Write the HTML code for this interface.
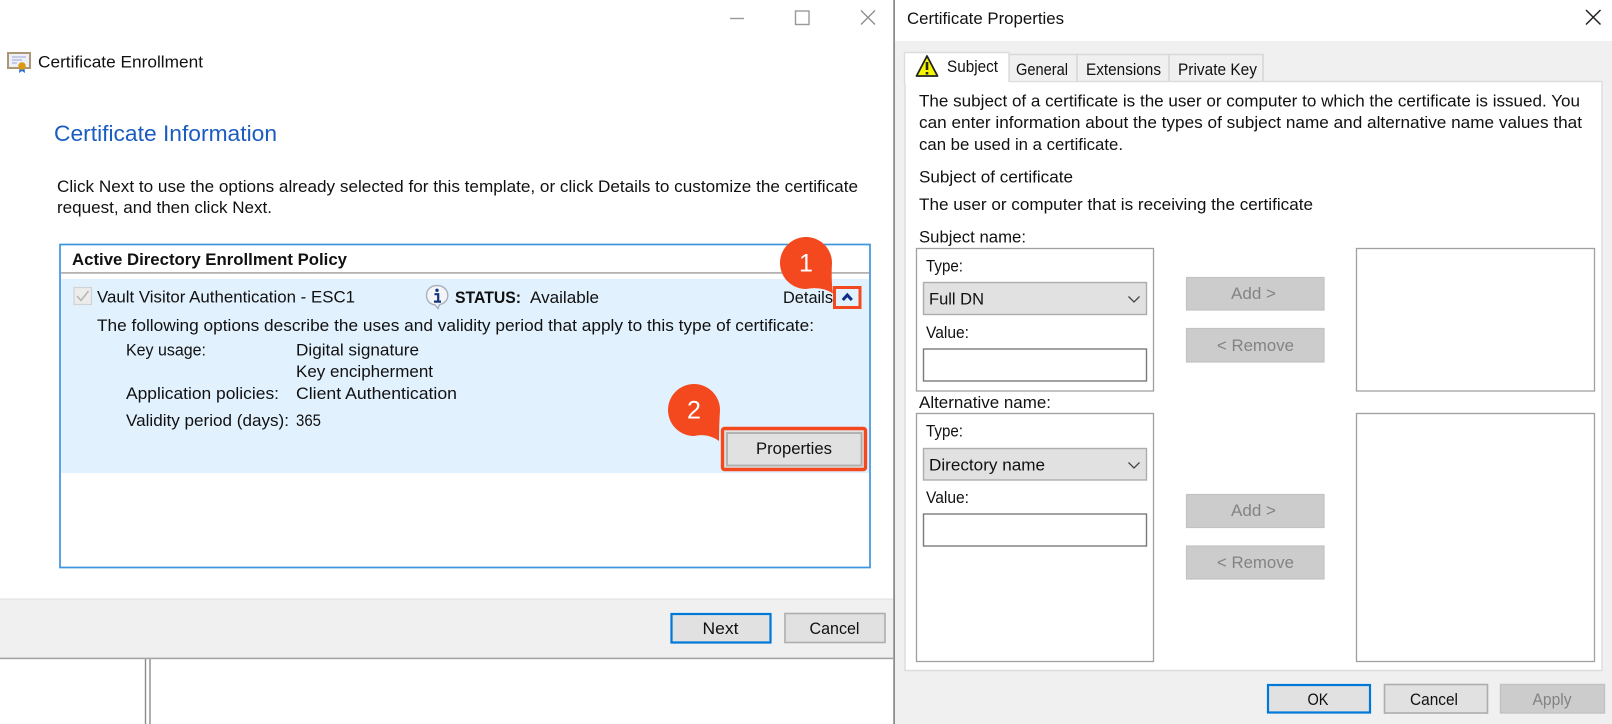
<!DOCTYPE html>
<html lang="en">
<head>
<meta charset="utf-8">
<title>Certificate Enrollment</title>
<style>
html,body{margin:0;padding:0;background:#fff;width:1612px;height:724px;overflow:hidden}
svg{display:block;filter:blur(.35px)}
text{font-family:"Liberation Sans",Arial,sans-serif;font-size:16.5px;fill:#111}
.d{fill:#838383}
.b{font-weight:700}
</style>
</head>
<body>
<svg xmlns="http://www.w3.org/2000/svg" width="1612" height="724" viewBox="0 0 1612 724">
<rect width="1612" height="724" fill="#fff"/>

<!-- Left window controls -->
<path d="M730 18.5H744" stroke="#999" stroke-width="1.4" fill="none"/>
<rect x="795.5" y="11" width="13.5" height="13.5" fill="none" stroke="#999" stroke-width="1.4"/>
<path d="M861 10.5L875 24.5M875 10.5L861 24.5" stroke="#8f8f8f" stroke-width="1.4" fill="none"/>

<!-- Certificate icon -->
<rect x="8" y="53" width="22" height="15" fill="#eef0f8" stroke="#ab9775" stroke-width="2"/>
<path d="M12 57H26M12 60H22M12 63H17" stroke="#9aa3d6" stroke-width="1.1" fill="none"/>
<path d="M19.5 68L19 73L22 71L25 73L24.5 68Z" fill="#2a6fd6"/>
<circle cx="22" cy="66" r="3.8" fill="#dc9a14"/>

<text x="38" y="67.5" textLength="165" lengthAdjust="spacingAndGlyphs">Certificate Enrollment</text>
<text x="54" y="141" textLength="223" lengthAdjust="spacingAndGlyphs" style="font-size:22px;fill:#1a5cc0">Certificate Information</text>
<text x="57" y="192" textLength="801" lengthAdjust="spacingAndGlyphs">Click Next to use the options already selected for this template, or click Details to customize the certificate</text>
<text x="57" y="213" textLength="215" lengthAdjust="spacingAndGlyphs">request, and then click Next.</text>

<!-- Policy panel -->
<rect x="60" y="244.5" width="810" height="323" fill="#fff" stroke="#3d95e0" stroke-width="1.7"/>
<rect x="61" y="272" width="808" height="1.8" fill="#b4b4b4"/>
<rect x="61" y="279" width="808" height="194" fill="#e2f1fe"/>
<text x="72" y="265" textLength="275" lengthAdjust="spacingAndGlyphs" class="b">Active Directory Enrollment Policy</text>

<rect x="74" y="287.5" width="17.5" height="17" fill="#ececec" stroke="#d2d2d2" stroke-width="1.2"/>
<path d="M77 296L81 300.5L88.5 291" stroke="#b5b5b5" stroke-width="1.5" fill="none"/>
<text x="97" y="302.7" textLength="258" lengthAdjust="spacingAndGlyphs">Vault Visitor Authentication - ESC1</text>

<!-- Info icon -->
<path d="M437 285.5C430.5 285.5 426.5 290 426.5 295.5C426.5 301 430.5 304.5 435 304.8L438 308.5L439.5 304.6C444.5 303.6 447.8 300 447.8 295.5C447.8 290 443.5 285.5 437 285.5Z" fill="#f3f5f9" stroke="#a9b0bc" stroke-width="1.4"/>
<circle cx="437" cy="290.3" r="1.7" fill="#13357f"/>
<path d="M434.5 294.2H438.2V301M434 301.6H441" stroke="#13357f" stroke-width="2.2" fill="none"/>

<text x="455" y="303" textLength="66" lengthAdjust="spacingAndGlyphs" class="b">STATUS:</text>
<text x="530" y="303" textLength="69" lengthAdjust="spacingAndGlyphs">Available</text>
<text x="783" y="303" textLength="50" lengthAdjust="spacingAndGlyphs">Details</text>

<path d="M842.8 300L847.3 295L851.8 300" stroke="#0f2f8a" stroke-width="3" fill="none"/>
<rect x="834.5" y="287.5" width="25.5" height="20" fill="none" stroke="#f4491f" stroke-width="3"/>

<text x="97" y="331" textLength="717" lengthAdjust="spacingAndGlyphs">The following options describe the uses and validity period that apply to this type of certificate:</text>
<text x="126" y="355.7" textLength="80" lengthAdjust="spacingAndGlyphs">Key usage:</text>
<text x="296" y="355.7" textLength="123" lengthAdjust="spacingAndGlyphs">Digital signature</text>
<text x="296" y="377" textLength="137" lengthAdjust="spacingAndGlyphs">Key encipherment</text>
<text x="126" y="399" textLength="153" lengthAdjust="spacingAndGlyphs">Application policies:</text>
<text x="296" y="399" textLength="161" lengthAdjust="spacingAndGlyphs">Client Authentication</text>
<text x="126" y="426" textLength="163" lengthAdjust="spacingAndGlyphs">Validity period (days):</text>
<text x="296" y="426" textLength="25" lengthAdjust="spacingAndGlyphs">365</text>

<!-- Properties -->
<rect x="722.5" y="428.5" width="143" height="41" rx="2" fill="#e1e1e1" stroke="#f4491f" stroke-width="3.4"/>
<rect x="727" y="433" width="134.5" height="32.5" fill="#e1e1e1" stroke="#adadad" stroke-width="1.8"/>
<text x="756" y="454" textLength="76" lengthAdjust="spacingAndGlyphs">Properties</text>

<!-- Callouts -->
<path d="M806 237A26 26 0 0 1 832 263Q831 280 833 293.5Q822 286 806 289A26 26 0 0 1 806 237Z" fill="#f4491f"/>
<text x="806" y="271.5" text-anchor="middle" style="font-size:25px;fill:#fff">1</text>
<path d="M694 384A26 26 0 0 1 720 410Q719 427 719 441Q708 433 694 436A26 26 0 0 1 694 384Z" fill="#f4491f"/>
<text x="694" y="418.5" text-anchor="middle" style="font-size:25px;fill:#fff">2</text>

<!-- Bottom bar left -->
<rect x="0" y="599" width="893" height="59" fill="#f0f0f0"/>
<rect x="0" y="598.5" width="893" height="1.2" fill="#e2e2e2"/>
<rect x="0" y="657.6" width="893" height="1.6" fill="#a6a6a6"/>
<rect x="671.5" y="614" width="99" height="28.5" fill="#e1e1e1" stroke="#0078d7" stroke-width="2.2"/>
<text x="720.5" y="634" text-anchor="middle" textLength="36" lengthAdjust="spacingAndGlyphs">Next</text>
<rect x="785" y="613.5" width="100" height="29" fill="#e1e1e1" stroke="#adadad" stroke-width="1.6"/>
<text x="834.5" y="634" text-anchor="middle" textLength="50" lengthAdjust="spacingAndGlyphs">Cancel</text>
<path d="M145.5 659V724M150 659V724" stroke="#8b8b8b" stroke-width="1.4" fill="none"/>

<!-- Divider -->
<rect x="893.3" y="0" width="1.6" height="724" fill="#7f7f7f"/>

<!-- Right window -->
<text x="907" y="24" textLength="157" lengthAdjust="spacingAndGlyphs">Certificate Properties</text>
<path d="M1586 10L1600.5 24.5M1600.5 10L1586 24.5" stroke="#222" stroke-width="1.5" fill="none"/>
<rect x="895" y="41" width="717" height="683" fill="#f0f0f0"/>
<rect x="905" y="81.5" width="697" height="589" fill="#fff" stroke="#dcdcdc" stroke-width="1.4"/>

<!-- Tabs -->
<path d="M1009 81V54.5H1077V81M1077 54.5H1169V81M1169 54.5H1263V81" fill="#f0f0f0" stroke="#d8d8d8" stroke-width="1.6"/>
<rect x="904.5" y="52" width="104.5" height="32" fill="#fff"/>
<path d="M904.5 84V52.5H1009V82" fill="none" stroke="#dcdcdc" stroke-width="1.4"/>
<path d="M927 56L937.5 76H916.5Z" fill="#f7f400" stroke="#222" stroke-width="1.8" stroke-linejoin="round"/>
<path d="M927 62V70M927 72V74.5" stroke="#2a2a10" stroke-width="2.6" fill="none"/>
<text x="947" y="72" textLength="51" lengthAdjust="spacingAndGlyphs">Subject</text>
<text x="1016" y="75" textLength="52" lengthAdjust="spacingAndGlyphs">General</text>
<text x="1086" y="75" textLength="75" lengthAdjust="spacingAndGlyphs">Extensions</text>
<text x="1178" y="75" textLength="79" lengthAdjust="spacingAndGlyphs">Private Key</text>

<text x="919" y="106.7" textLength="661" lengthAdjust="spacingAndGlyphs">The subject of a certificate is the user or computer to which the certificate is issued. You</text>
<text x="919" y="128" textLength="663" lengthAdjust="spacingAndGlyphs">can enter information about the types of subject name and alternative name values that</text>
<text x="919" y="150" textLength="204" lengthAdjust="spacingAndGlyphs">can be used in a certificate.</text>
<text x="919" y="182.7" textLength="154" lengthAdjust="spacingAndGlyphs">Subject of certificate</text>
<text x="919" y="210" textLength="394" lengthAdjust="spacingAndGlyphs">The user or computer that is receiving the certificate</text>
<text x="919" y="242.7" textLength="107" lengthAdjust="spacingAndGlyphs">Subject name:</text>

<!-- Subject group -->
<rect x="916.5" y="248.5" width="237" height="142.5" fill="#fff" stroke="#a0a0a0" stroke-width="1.3"/>
<rect x="1356.5" y="248.5" width="238" height="142.5" fill="#fff" stroke="#a0a0a0" stroke-width="1.3"/>
<text x="926" y="271.5" textLength="37" lengthAdjust="spacingAndGlyphs">Type:</text>
<rect x="923.5" y="282.5" width="223" height="32" fill="#e1e1e1" stroke="#adadad" stroke-width="1.4"/>
<text x="929" y="304.5" textLength="55" lengthAdjust="spacingAndGlyphs">Full DN</text>
<path d="M1128.5 296.5L1134 302L1139.5 296.5" stroke="#444" stroke-width="1.3" fill="none"/>
<text x="926" y="338" textLength="43" lengthAdjust="spacingAndGlyphs">Value:</text>
<rect x="923.5" y="349" width="223" height="32" fill="#fff" stroke="#7a7a7a" stroke-width="1.4"/>

<rect x="1186.5" y="277.5" width="137.5" height="32.5" fill="#ccc" stroke="#c2c2c2" stroke-width="1.2"/>
<text x="1231" y="299" textLength="45" lengthAdjust="spacingAndGlyphs" class="d">Add &gt;</text>
<rect x="1186.5" y="328.5" width="137.5" height="33.5" fill="#ccc" stroke="#c2c2c2" stroke-width="1.2"/>
<text x="1217" y="351" textLength="77" lengthAdjust="spacingAndGlyphs" class="d">&lt; Remove</text>

<!-- Alternative group -->
<text x="919" y="408" textLength="132" lengthAdjust="spacingAndGlyphs">Alternative name:</text>
<rect x="916.5" y="413.5" width="237" height="248" fill="#fff" stroke="#a0a0a0" stroke-width="1.3"/>
<rect x="1356.5" y="413.5" width="238" height="248" fill="#fff" stroke="#a0a0a0" stroke-width="1.3"/>
<text x="926" y="436.5" textLength="37" lengthAdjust="spacingAndGlyphs">Type:</text>
<rect x="923.5" y="448.5" width="223" height="31.5" fill="#e1e1e1" stroke="#adadad" stroke-width="1.4"/>
<text x="929" y="470.5" textLength="116" lengthAdjust="spacingAndGlyphs">Directory name</text>
<path d="M1128.5 462.5L1134 468L1139.5 462.5" stroke="#444" stroke-width="1.3" fill="none"/>
<text x="926" y="503" textLength="43" lengthAdjust="spacingAndGlyphs">Value:</text>
<rect x="923.5" y="514" width="223" height="32" fill="#fff" stroke="#7a7a7a" stroke-width="1.4"/>

<rect x="1186.5" y="494.5" width="137.5" height="33" fill="#ccc" stroke="#c2c2c2" stroke-width="1.2"/>
<text x="1231" y="516" textLength="45" lengthAdjust="spacingAndGlyphs" class="d">Add &gt;</text>
<rect x="1186.5" y="546" width="137.5" height="33" fill="#ccc" stroke="#c2c2c2" stroke-width="1.2"/>
<text x="1217" y="568" textLength="77" lengthAdjust="spacingAndGlyphs" class="d">&lt; Remove</text>

<!-- Bottom right buttons -->
<rect x="1268" y="685" width="102" height="27.5" fill="#e1e1e1" stroke="#0078d7" stroke-width="2.2"/>
<text x="1318" y="705" text-anchor="middle" textLength="21" lengthAdjust="spacingAndGlyphs">OK</text>
<rect x="1384.5" y="684.5" width="103" height="28.5" fill="#e1e1e1" stroke="#adadad" stroke-width="1.6"/>
<text x="1434" y="705" text-anchor="middle" textLength="48" lengthAdjust="spacingAndGlyphs">Cancel</text>
<rect x="1500.5" y="684.5" width="104" height="28.5" fill="#ccc" stroke="#c2c2c2" stroke-width="1.4"/>
<text x="1552" y="705" text-anchor="middle" textLength="39" lengthAdjust="spacingAndGlyphs" class="d">Apply</text>
</svg>
</body>
</html>
